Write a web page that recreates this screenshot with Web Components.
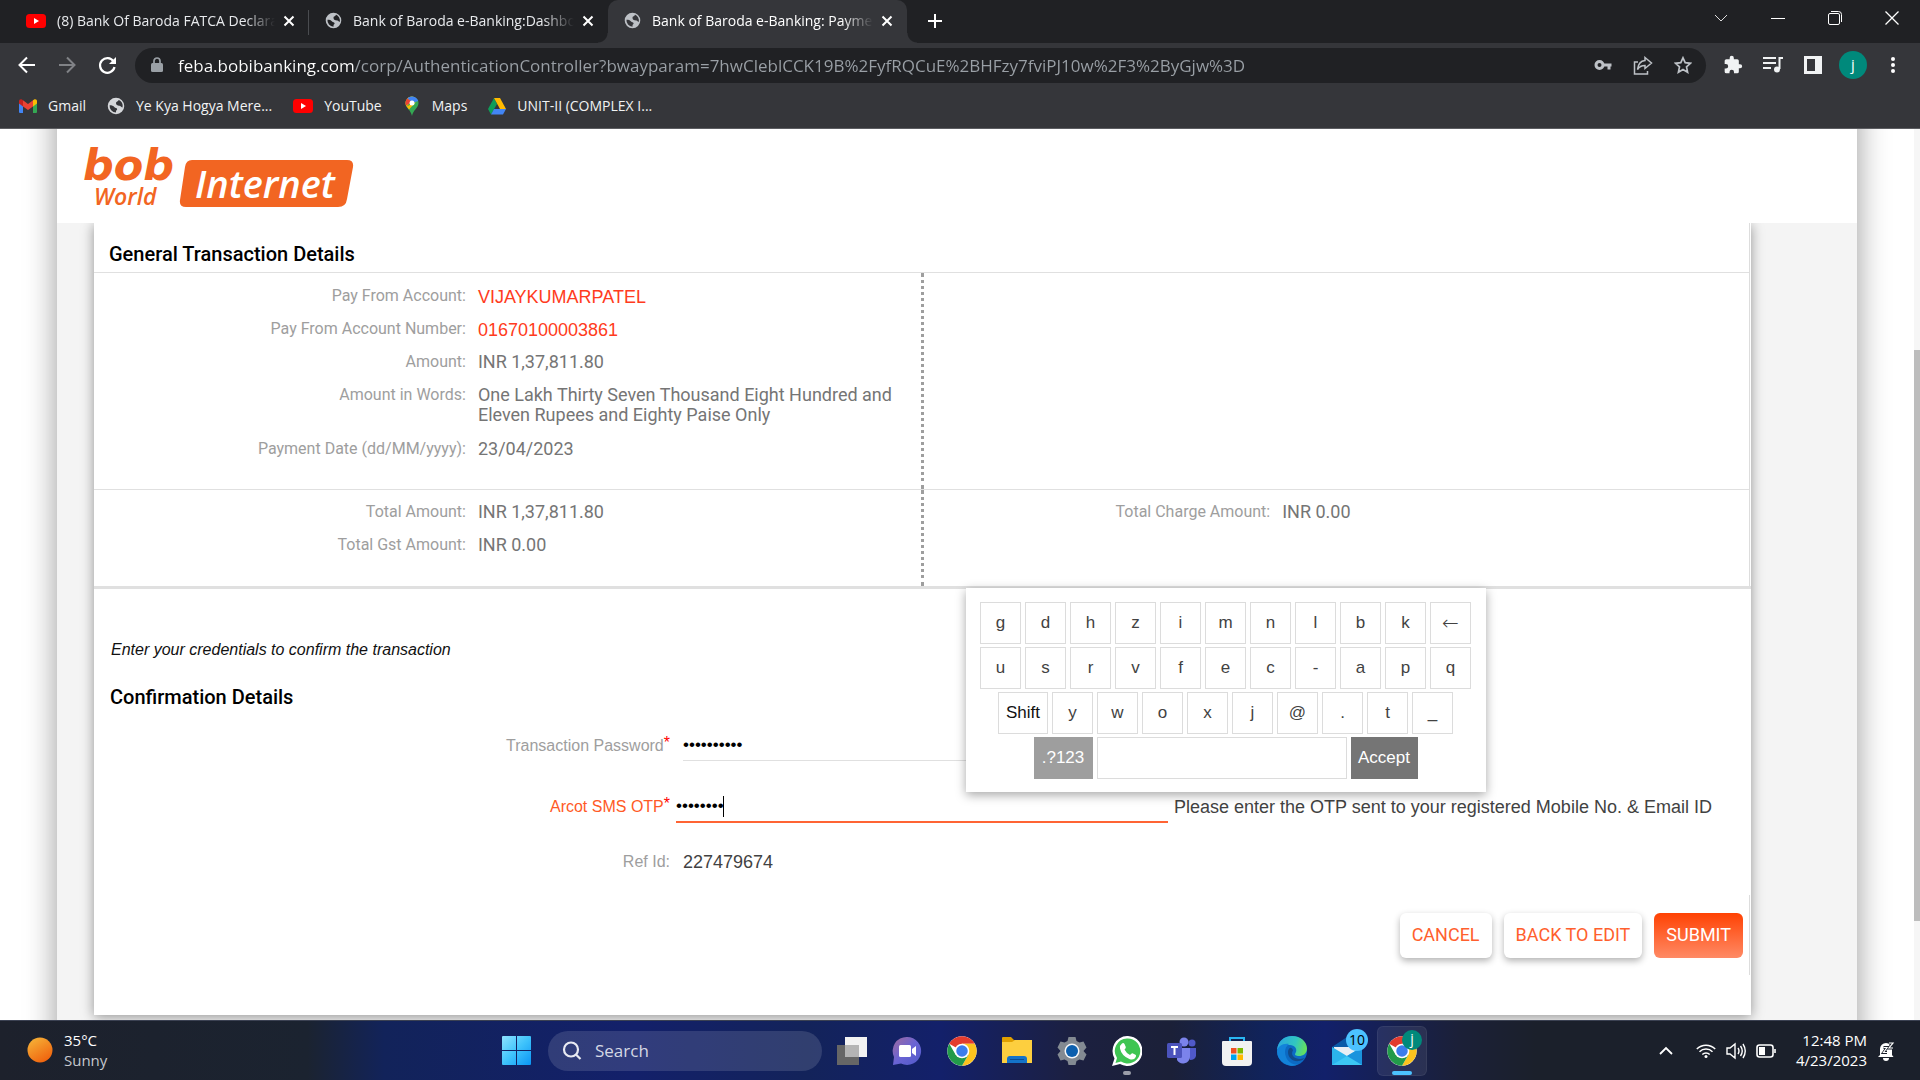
<!DOCTYPE html>
<html lang="en">
<head>
<meta charset="utf-8">
<title>Bank of Baroda e-Banking: Payments</title>
<style>
html,body{margin:0;height:100%;overflow:hidden;background:#fff}
</style>
</head>
<body>
<desktop-screen></desktop-screen>
<script>
const globe = '<svg width="17" height="17" viewBox="0 0 24 24" fill="#bdc1c6"><path d="M12 1a11 11 0 1 0 0 22 11 11 0 0 0 0-22zM3.500 11c3 0 5 .5 6.500 2.500 1 1.500 3 .5 3.500 2.500.3 1.500-1.500 1.500-1.500 3v1.800A8.900 8.900 0 0 1 3.500 11zm8.500-3c0-2 2-1.500 3-3 .6-.8.300-1.500.3-1.500a9 9 0 0 1 5.400 10.500c-1.200 0-1.700-1.500-3.200-2-2-.6-5.500-.5-5.500-4z"/></svg>';
const youtube = '<svg width="20" height="14" viewBox="0 0 20 14"><rect width="20" height="14" rx="3.500" fill="#f00"/><path d="M8 4l5 3-5 3z" fill="#fff"/></svg>';
const chromeIcon = '<svg width="30" height="30" viewBox="0 0 48 48"><circle cx="24" cy="24" r="23.500" fill="#fff"/><path d="M24 24L3.650 12.250A23.500 23.500 0 0 1 44.350 12.250H24z" fill="#e33b2e"/><path d="M44.350 12.250A23.500 23.500 0 0 1 24 47.500L34.200 29.900 24 12.250z" fill="#fcc31e"/><path d="M3.650 12.250A23.500 23.500 0 0 0 24 47.500l10.200-17.600-20.400 0z" fill="#229a4a"/><circle cx="24" cy="24" r="11.700" fill="#fff"/><circle cx="24" cy="24" r="9.200" fill="#3b7ded"/></svg>';

class View extends HTMLElement {
  connectedCallback() {
    if (this.shadowRoot) return;
    const root = this.attachShadow({ mode: "open" });
    root.innerHTML = "<style>*{box-sizing:border-box}button,input{font:inherit;border:0;background:none;padding:0;margin:0;outline:0}" + this.constructor.css + "</style>" + this.render();
  }
  attr(name) { return this.getAttribute(name) || ""; }
}

customElements.define("desktop-screen", class extends View {
  static css = ":host{display:flex;flex-direction:column;height:100vh;font-family:'Open Sans','Noto Sans',sans-serif}bank-page{flex:1;min-height:0}";
  render() { return "<browser-chrome></browser-chrome><bank-page></bank-page><task-bar></task-bar>"; }
});

customElements.define("browser-tab", class extends View {
  static css = `:host{display:flex;align-items:center;width:299px;height:43px;padding:0 10px 2px 16px;box-sizing:border-box;color:#e8eaed;font-size:14px;line-height:20px;position:relative}
  :host([active]){background:#35363a;border-radius:10px 10px 0 0;color:#fff}
  :host([divided]){background:linear-gradient(#4a4c50,#4a4c50) right 10px/1px 25px no-repeat}
  :host([active])::before,:host([active])::after{content:"";position:absolute;bottom:0;width:10px;height:10px}
  :host([active])::before{left:-10px;background:radial-gradient(circle at 0 0,transparent 9px,#35363a 10px)}
  :host([active])::after{right:-10px;background:radial-gradient(circle at 100% 0,transparent 9px,#35363a 10px)}
  .i{display:flex;min-width:17px}
  .t{flex:1;min-width:0;white-space:nowrap;overflow:hidden;margin:0 4px 0 11px;-webkit-mask-image:linear-gradient(90deg,#000 86%,transparent);mask-image:linear-gradient(90deg,#000 86%,transparent)}
  button{width:20px;height:20px;display:grid;place-items:center;color:inherit}`;
  render() { return `<span class="i">${this.attr("icon") === "yt" ? youtube : globe}</span><span class="t"><slot></slot></span><button aria-label="Close tab"><svg width="12" height="12" viewBox="0 0 12 12" stroke="#fff" stroke-width="2" fill="none"><path d="M1.500 1.500l9 9M10.500 1.500l-9 9"/></svg></button>`; }
});

customElements.define("bookmark-link", class extends View {
  static css = ":host{display:block}a{display:flex;align-items:center;gap:11px;color:#f1f3f4;text-decoration:none;font-size:14px;line-height:20px;white-space:nowrap}.i{display:flex}";
  render() { return `<a href="#"><span class="i"><slot name="icon"></slot></span><slot></slot></a>`; }
});

customElements.define("browser-chrome", class extends View {
  static css = `:host{display:block;background:#35363a}
  .strip{display:flex;background:#202124;height:43px;padding-left:10px}
  browser-tab{flex:0 1 299px}
  .cell{display:grid;place-items:center;width:40px;height:40px}
  .new{width:34px;height:42px;margin-left:11px;display:grid;place-items:center}
  .wins{margin-left:auto;display:flex}.wins button{width:57px;height:36px;display:grid;place-items:center}
  .bar{display:flex;align-items:center;height:44px;padding:0 7px}
  .url{flex:1;display:flex;align-items:center;height:35px;background:#202124;border-radius:18px;margin:0 7px 0 8px;padding:0 3px 0 15px;min-width:0}
  .url svg{flex:none}
  .url input{flex:1;min-width:0;margin-left:14px;height:30px;font-size:17px;color:#9aa0a6;-webkit-text-fill-color:transparent;background:linear-gradient(90deg,#fff 176px,#9aa0a6 176px);-webkit-background-clip:text;background-clip:text}
  .av{width:28px;height:28px;border-radius:50%;background:#00897b;color:#fff;font-size:15px;line-height:26px;text-align:center}
  nav{display:flex;align-items:center;gap:21px;height:41px;padding:0 19px 3px}
  .line{height:1px;background:#5c5d61}`;
  render() { return `
  <div class="strip" role="tablist">
    <browser-tab icon="yt" divided>(8) Bank Of Baroda FATCA Declaration</browser-tab>
    <browser-tab>Bank of Baroda e-Banking:Dashboard</browser-tab>
    <browser-tab active>Bank of Baroda e-Banking: Payments</browser-tab>
    <button class="new" aria-label="New tab"><svg width="16" height="16" stroke="#fff" stroke-width="2"><path d="M8 1v14M1 8h14"/></svg></button>
    <div class="wins">
      <button aria-label="Search tabs"><svg width="14" height="9" fill="none" stroke="#ddd"><path d="M1 1l6 6 6-6"/></svg></button>
      <button aria-label="Minimize"><svg width="14" height="14" stroke="#fff"><path d="M0 7.500h14"/></svg></button>
      <button aria-label="Restore"><svg width="14" height="14" fill="none" stroke="#fff"><rect x=".5" y="2.500" width="11" height="11" rx="1.500"/><path d="M3 .5h7.500a3 3 0 0 1 3 3V11"/></svg></button>
      <button aria-label="Close"><svg width="14" height="14" stroke="#fff" stroke-width="1.300"><path d="M.5.5l13 13M13.500.5l-13 13"/></svg></button>
    </div>
  </div>
  <div class="bar">
    <button class="cell" aria-label="Back"><svg width="18" height="18" fill="none" stroke="#fff" stroke-width="2"><path d="M17 9H2M9 1.500L1.500 9 9 16.500"/></svg></button>
    <button class="cell" aria-label="Forward"><svg width="18" height="18" fill="none" stroke="#808286" stroke-width="2"><path d="M1 9h15M9 1.500L16.500 9 9 16.500"/></svg></button>
    <button class="cell" aria-label="Reload"><svg width="19" height="19" viewBox="0 0 19 19" fill="none" stroke="#fff" stroke-width="2.200"><path d="M15.500 5.500A7.300 7.300 0 1 0 16.500 11"/><path d="M18 1v7h-7z" fill="#fff" stroke="none"/></svg></button>
    <div class="url">
      <svg width="14" height="16" viewBox="0 0 14 16"><rect x="1" y="6" width="12" height="9" rx="1.500" fill="#9aa0a6"/><path d="M4 6V4a3 3 0 0 1 6 0v2" fill="none" stroke="#9aa0a6" stroke-width="1.700"/></svg>
      <input aria-label="Address" value="feba.bobibanking.com/corp/AuthenticationController?bwayparam=7hwCleblCCK19B%2FyfRQCuE%2BHFzy7fviPJ10w%2F3%2ByGjw%3D">
      <button class="cell" aria-label="Passwords"><svg width="18" height="12" fill="none" stroke="#bdc1c6"><circle cx="5.500" cy="6" r="3.500" stroke-width="3"/><path d="M9 6h8.500M15 6v4.500" stroke-width="3"/></svg></button>
      <button class="cell" aria-label="Share"><svg width="20" height="19" fill="none" stroke="#bdc1c6" stroke-width="1.500"><path d="M5 6H1.500v12h13v-3"/><path d="M12 1.500L18.500 7 12 12.500V9.500c-4 0-6 1.500-7.500 4C5 9 7 5 12 4.500z"/></svg></button>
      <button class="cell" aria-label="Bookmark"><svg width="18" height="18" viewBox="0 0 18 18" fill="none" stroke="#bdc1c6" stroke-width="1.700"><path d="M9 1.800l2.200 4.900 5.300.6-4 3.600 1.100 5.300L9 13.500l-4.600 2.700 1.100-5.300-4-3.600 5.300-.6z"/></svg></button>
    </div>
    <button class="cell" aria-label="Extensions"><svg width="20" height="20" viewBox="0 0 24 24" fill="#f1f3f4"><path d="M20.500 11H19V7a2 2 0 0 0-2-2h-4V3.500a2.500 2.500 0 0 0-5 0V5H4a2 2 0 0 0-2 2v3.800h1.500a2.700 2.700 0 0 1 0 5.400H2V20a2 2 0 0 0 2 2h3.800v-1.500a2.700 2.700 0 0 1 5.400 0V22H17a2 2 0 0 0 2-2v-4h1.500a2.500 2.500 0 0 0 0-5z"/></svg></button>
    <button class="cell" aria-label="Media"><svg width="20" height="18" fill="none" stroke="#f1f3f4" stroke-width="2"><path d="M0 2h13M0 7h13M0 12h8M16.500 13V2H20"/><circle cx="14" cy="13.500" r="3" fill="#f1f3f4" stroke="none"/></svg></button>
    <button class="cell" aria-label="Side panel"><svg width="18" height="18"><path d="M0 0h18v18H0zM3 3v12h8V3z" fill="#f1f3f4" fill-rule="evenodd"/></svg></button>
    <button class="cell" aria-label="Profile"><span class="av">j</span></button>
    <button class="cell" aria-label="Menu"><svg width="6" height="18" fill="#fff"><circle cx="3" cy="3" r="2"/><circle cx="3" cy="9" r="2"/><circle cx="3" cy="15" r="2"/></svg></button>
  </div>
  <nav>
    <bookmark-link><svg slot="icon" width="18" height="14" viewBox="0 0 18 14"><path d="M0 2v11a1 1 0 0 0 1 1h3V5z" fill="#4285f4"/><path d="M18 2v11a1 1 0 0 1-1 1h-3V5z" fill="#34a853"/><path d="M14 1.200L15.500.3C16.800-.3 18 .8 18 2v2.500l-4 3z" fill="#fbbc04"/><path d="M0 4.500V2C0 .8 1.200-.3 2.500.3L4 1.200v6.300z" fill="#c5221f"/><path d="M4 7.500V1.200L9 5l5-3.800v6.300L9 11z" fill="#ea4335"/></svg>Gmail</bookmark-link>
    <bookmark-link><svg slot="icon" width="18" height="18" viewBox="0 0 24 24" fill="#d5d7da"><path d="M12 1a11 11 0 1 0 0 22 11 11 0 0 0 0-22zM3.500 11c3 0 5 .5 6.500 2.500 1 1.500 3 .5 3.500 2.500.3 1.500-1.500 1.500-1.500 3v1.800A8.900 8.900 0 0 1 3.500 11zm8.500-3c0-2 2-1.500 3-3 .6-.8.300-1.500.3-1.500a9 9 0 0 1 5.400 10.500c-1.200 0-1.700-1.500-3.200-2-2-.6-5.500-.5-5.500-4z"/></svg>Ye Kya Hogya Mere...</bookmark-link>
    <bookmark-link><svg slot="icon" width="20" height="14" viewBox="0 0 20 14"><rect width="20" height="14" rx="3.500" fill="#f00"/><path d="M8 4l5 3-5 3z" fill="#fff"/></svg>YouTube</bookmark-link>
    <bookmark-link><svg slot="icon" width="18" height="20" viewBox="0 0 18 20"><path d="M2.500 7a6.500 6.500 0 0 1 13 0c0 5-5.500 7-6.500 13C8 14 2.500 12 2.500 7z" fill="#34a853"/><path d="M3.600 10.500L12 1.200 9 .5A6.500 6.500 0 0 0 3.600 10.500L6 13.500 13 6z" fill="#fbbc04"/><path d="M4.500 2.400A6.500 6.500 0 0 1 15.200 5L9 7z" fill="#4285f4"/><path d="M4.500 2.400A6.500 6.500 0 0 0 3 9.500L9 6z" fill="#ea4335"/><circle cx="9" cy="7" r="2.500" fill="#fff"/></svg>Maps</bookmark-link>
    <bookmark-link><svg slot="icon" width="18" height="17" viewBox="0 0 18 17"><path d="M6 0L0 11l3 5.500L9 6z" fill="#0f9d58"/><path d="M6 0h6l6 11h-6z" fill="#ffba00"/><path d="M6 11h12l-3 5.500H3z" fill="#4285f4"/></svg>UNIT-II (COMPLEX I...</bookmark-link>
  </nav>
  <div class="line"></div>`; }
});

customElements.define("bob-logo", class extends View {
  static css = ":host{display:block}svg{display:block;overflow:visible}text{font-style:italic;font-family:'Open Sans',sans-serif;font-weight:600}.b{font-family:'DejaVu Sans',sans-serif;font-weight:700}";
  render() { return `<svg width="270" height="68" viewBox="0 0 270 68" role="img" aria-label="bob World Internet">
    <text class="b" x="-2" y="35" font-size="43" fill="#f26522">bob</text>
    <text x="9" y="60" font-size="23" fill="#f26522">World</text>
    <path d="M107 15h155q7 0 6 7l-6 32q-1 8-9 8H101q-7 0-6-7l5-33q1-7 7-7z" fill="#f26522"/>
    <text x="110" y="53" font-size="38" fill="#fff">Internet</text></svg>`; }
});

customElements.define("detail-row", class extends View {
  static css = `:host{display:grid;grid-template-columns:var(--label-share,45%) 1fr;column-gap:12px;min-height:33px;font-family:Roboto,sans-serif;align-items:start}
  .l{text-align:right;font-size:16px;line-height:20px;color:#9e9e9e}
  .v{font-size:18px;line-height:20px;padding-right:24px;color:#757575}
  :host([accent]) .v{padding-top:1px;color:#ff3b20;font-family:"Liberation Sans",sans-serif}`;
  render() { return `<span class="l">${this.attr("label")}</span><span class="v"><slot></slot></span>`; }
});

customElements.define("form-field", class extends View {
  static css = `:host{display:grid;grid-template-columns:576px 1fr;column-gap:13px;align-items:start;font-family:"Liberation Sans",sans-serif;line-height:22px;font-size:18px;color:#424242}
  label{text-align:right;color:#9e9e9e;font-size:16px;display:flex;justify-content:flex-end}
  sup{color:#f00;font-size:16px;line-height:16px;vertical-align:top}
  .box{display:flex;align-items:flex-start;gap:6px;white-space:nowrap}
  input{display:block;width:492px;height:26px;color:#000;border-bottom:1px solid #e0e0e0;font-size:17px;padding:0 0 6px}
  :host([focused]){column-gap:6px}:host([focused]) label{color:#ff5a26}:host([focused]) input{height:27px;border-bottom:2px solid #ff6434;padding:0 0 5px}
  .in{position:relative}.caret{position:absolute;left:47px;top:0;width:1px;height:21px;background:#000}`;
  render() {
    const dots = +this.attr("dots");
    if (!dots) return `<label for="f">${this.attr("label")}</label><output id="f" class="box"><slot></slot></output>`;
    const star = this.hasAttribute("required") ? "<sup>*</sup>" : "";
    const caret = this.hasAttribute("focused") ? '<i class="caret"></i>' : "";
    return `<label for="f">${this.attr("label")}${star}</label><span class="box"><span class="in"><input id="f" type="password" value="${"x".repeat(dots)}">${caret}</span><slot></slot></span>`;
  }
});

customElements.define("virtual-keyboard", class extends View {
  static css = `:host{display:flex;flex-direction:column;align-items:center;gap:3px;padding:14px 14px 13px;width:520px;background:#fff;box-shadow:0 3px 10px rgba(0,0,0,.35);font:17px/20px "Liberation Sans",sans-serif;box-sizing:border-box}
  div{display:flex;gap:4px}button{width:41px;height:42px;border:1px solid #dcdcdc;color:#424242;background:#fff}
  .back{font-family:"DejaVu Sans",sans-serif;font-weight:200;font-size:20px}
  .shift{width:50px;color:#111}.num{width:59px;background:#9e9e9e;border-color:#9e9e9e;color:#fff}.space{width:250px}.ok{width:67px;background:#757575;border-color:#757575;color:#fff}`;
  render() {
    const row = s => "<div>" + [...s].map(k => `<button>${k}</button>`).join("") + "</div>";
    return row("gdhzimnlbk←").replace(">←", ' class="back" aria-label="Backspace">←') + row("usrvfec-apq") + row("Sywoxj@.t_").replace(">S<", ' class="shift">Shift<') +
      '<div><button class="num">.?123</button><button class="space" aria-label="Space"></button><button class="ok">Accept</button></div>';
  }
});

customElements.define("action-button", class extends View {
  static css = `:host{display:block}button{height:45px;padding:0 12px 1px;border-radius:6px;background:#fff;color:#ff5f2e;font:18px/24px Roboto,sans-serif;box-shadow:0 3px 7px rgba(0,0,0,.3)}
  :host([primary]) button{background:linear-gradient(#ff4203,#ff8a65);color:#fff;box-shadow:none}`;
  render() { return "<button><slot></slot></button>"; }
});

customElements.define("bank-page", class extends View {
  static css = `:host{display:flex;overflow:hidden;background:#fff;font-family:Roboto,sans-serif}
  .wrap{flex:1;display:flex;padding:0 57px;overflow:hidden}
  .page{flex:1;display:flex;flex-direction:column;margin:-40px 0;background:#f4f4f4;box-shadow:0 0 30px rgba(0,0,0,.4)}
  header{background:#fff;height:134px;padding:56px 0 0 28px;flex:none;z-index:1}
  main{margin:0 106px 45px 37px;flex:1;background:#fff;box-shadow:0 2px 12px rgba(0,0,0,.4);display:flex;flex-direction:column}
  h2{margin:0;font-size:20px;line-height:24px;font-weight:500;color:#000}
  .sum{border-right:1px solid #ddd;margin-right:1px}
  .sum h2{padding:19px 15px 6px;border-bottom:1px solid #e0e0e0}
  .cols{display:grid;grid-template-columns:calc(50% + 2px) 1fr}
  .cols>div:first-child{border-right:3px dotted #9e9e9e}
  .a>div{padding-top:13px;height:216px}
  .b{border-top:1px solid #e0e0e0}.b>div{padding-top:12px;height:96px}
  .charges{--label-share:42%}
  .words{min-height:54px}
  .cred{position:relative;border-top:3px solid #e0e0e0;flex:1;display:flex;flex-direction:column}
  .note{margin:49px 17px 0;font:italic 16px/24px "Liberation Sans",sans-serif;color:#111}
  .cred h2{margin:23px 16px 0}
  .f{display:flex;flex-direction:column;padding-top:26px}
  .otp{margin:35px 0 28px}
  virtual-keyboard{position:absolute;top:-1px;left:calc(50% + 43px)}
  .acts{display:flex;justify-content:flex-end;gap:12px;margin:22px 1px 0 0;padding:18px 6px 17px;border-right:1px solid #ddd}
  .track{width:6px;background:#f6f6f6;padding-top:221px}.thumb{height:571px;background:#bdbdbd}`;
  render() { return `
  <div class="wrap"><div class="page">
    <header><bob-logo></bob-logo></header>
    <main>
      <section class="sum">
        <h2>General Transaction Details</h2>
        <div class="cols a"><div>
          <detail-row accent label="Pay From Account:">VIJAYKUMARPATEL</detail-row>
          <detail-row accent label="Pay From Account Number:">01670100003861</detail-row>
          <detail-row label="Amount:">INR 1,37,811.80</detail-row>
          <detail-row class="words" label="Amount in Words:">One Lakh Thirty Seven Thousand Eight Hundred and Eleven Rupees and Eighty Paise Only</detail-row>
          <detail-row label="Payment Date (dd/MM/yyyy):">23/04/2023</detail-row>
        </div><div></div></div>
        <div class="cols b"><div>
          <detail-row label="Total Amount:">INR 1,37,811.80</detail-row>
          <detail-row label="Total Gst Amount:">INR 0.00</detail-row>
        </div><div class="charges">
          <detail-row label="Total Charge Amount:">INR 0.00</detail-row>
        </div></div>
      </section>
      <section class="cred">
        <p class="note">Enter your credentials to confirm the transaction</p>
        <h2>Confirmation Details</h2>
        <div class="f">
          <form-field required dots="10" label="Transaction Password"></form-field>
          <form-field class="otp" required focused dots="8" label="Arcot SMS OTP">Please enter the OTP sent to your registered Mobile No. &amp; Email ID</form-field>
          <form-field label="Ref Id:">227479674</form-field>
        </div>
        <div class="acts"><action-button>CANCEL</action-button><action-button>BACK TO EDIT</action-button><action-button primary>SUBMIT</action-button></div>
        <virtual-keyboard></virtual-keyboard>
      </section>
    </main>
  </div></div>
  <div class="track"><div class="thumb"></div></div>`; }
});

customElements.define("task-icon", class extends View {
  static css = `:host{display:grid;place-items:center;width:50px;height:50px;position:relative;border-radius:6px;flex:none}
  :host([active]){background:rgba(255,255,255,.08);box-shadow:inset 0 0 0 1px rgba(255,255,255,.06)}
  button{display:grid;place-items:center}
  .dot{position:absolute;bottom:1px;left:21px;width:8px;height:4px;border-radius:2px;background:#9a9ca8}
  :host([active]) .dot{left:15px;width:20px;background:#4cc2ff}
  .badge{position:absolute;top:3px;left:24px;width:22px;height:22px;border-radius:50%;line-height:21px;font-size:14px;text-align:center;background:#4cc2ff;color:#000}
  :host([active]) .badge{background:#00897b;color:#fff;left:25px;top:4px;width:20px;height:20px;line-height:17px}`;
  render() { return `<button aria-label="${this.attr("name")}"><slot></slot></button>${this.hasAttribute("open") ? '<i class="dot"></i>' : ""}${this.attr("badge") ? `<span class="badge">${this.attr("badge")}</span>` : ""}`; }
});

customElements.define("task-bar", class extends View {
  static css = `:host{display:grid;grid-template-columns:1fr auto 1fr;height:60px;box-sizing:border-box;border-top:1px solid #3b4152;color:#fff;font-size:15px;line-height:20px;
   background:linear-gradient(90deg,#1d212c 0,#1b2330 16%,#12235a 20%,#13206a 33%,#13235a 42%,#13206a 49%,#1c2040 56%,#1b2038 61%,#10235c 66%,#12206a 69%,#1b2038 76%,#1b202b 80%,#1b202b)}
  .w{display:flex;align-items:center;gap:11px;padding:0 27px 2px}.w div span{display:block}.w .s{color:#c6c8cd}
  .m{display:flex;align-items:center;gap:5px;padding-right:1px}
  label{display:flex;align-items:center;gap:13px;width:274px;height:40px;border-radius:20px;background:rgba(255,255,255,.13);padding:0 14px;margin-left:1px}
  label input{width:150px;color:#fff;font-size:17px}input::placeholder{color:#d5d8e4;opacity:1}
  .t{display:flex;align-items:center;justify-content:flex-end;padding-right:26px}.t button{display:grid;place-items:center;width:30px;height:40px}.t .up{margin-right:10px}
  .clk{text-align:right;width:86px;margin-right:11px;padding-bottom:2px;white-space:nowrap}.clk span{display:block}.t .bell{width:16px}`;
  render() { return `
  <div class="w"><svg width="26" height="26"><defs><linearGradient id="s" x1="0" y1="0" x2=".6" y2="1"><stop offset="0" stop-color="#f6b93b"/><stop offset="1" stop-color="#f0650f"/></linearGradient></defs><circle cx="13" cy="13" r="12.500" fill="url(#s)"/></svg><div><span>35°C</span><span class="s">Sunny</span></div></div>
  <div class="m">
    <task-icon name="Start"><svg width="30" height="30"><defs><linearGradient id="g" x1="0" y1="0" x2="1" y2="1"><stop offset="0" stop-color="#8fe3ff"/><stop offset=".5" stop-color="#3fc3fb"/><stop offset="1" stop-color="#0a95f5"/></linearGradient></defs><path d="M0 1q0-1 1-1h13v14H0zM15 0h13q1 0 1 1v13H15zM0 15h14v14H1q-1 0-1-1zM15 15h14v13q0 1-1 1H15z" fill="url(#g)"/></svg></task-icon>
    <label><svg width="20" height="20" fill="none" stroke="#e8eaf2" stroke-width="2.200"><circle cx="9" cy="8.500" r="7"/><path d="M14 13.500l4.500 4.500"/></svg><input type="search" aria-label="Search" placeholder="Search"></label>
    <task-icon name="Task view"><svg width="30" height="28"><rect y="8" width="22" height="20" fill="#666"/><rect x="8" width="22" height="20" fill="#f2f2f2"/><path d="M8 8h14v12H8z" fill="#b4b4b4"/></svg></task-icon>
    <task-icon name="Chat"><svg width="30" height="30"><defs><linearGradient id="c" x1="0" y1="0" x2="1" y2="1"><stop offset="0" stop-color="#a06a9c"/><stop offset=".5" stop-color="#6a64d4"/><stop offset="1" stop-color="#5059c9"/></linearGradient></defs><path d="M15 1a14 14 0 1 1-6 26.600L1 29l1-8A14 14 0 0 1 15 1z" fill="url(#c)"/><rect x="7" y="9" width="12" height="12" rx="1.500" fill="#fff"/><path d="M20 13l4-3v10l-4-3z" fill="#fff"/></svg></task-icon>
    <task-icon name="Chrome">${chromeIcon}</task-icon>
    <task-icon name="Files"><svg width="30" height="27"><path d="M0 1q0-1 1-1h8l3 3h10v6H0z" fill="#e0a000"/><path d="M0 5h10l3-2h17v23H0z" fill="#fdcf3f"/><path d="M5 26v-4q0-3 3-3h14q3 0 3 3v4z" fill="#1473c9"/><path d="M8 22.500h14" stroke="#0a4d94"/></svg></task-icon>
    <task-icon name="Settings"><svg width="30" height="30" viewBox="0 0 30 30"><path d="M11.500 1h7l1 4 3 1.500 4-1 3 6L26.500 15l3 3.500-3 6-4-1-3 1.500-1 4h-7l-1-4-3-1.500-4 1-3-6L3.500 15l-3-3.500 3-6 4 1 3-1.500z" fill="#838a92"/><circle cx="15" cy="15" r="7.500" fill="#f4f6f8"/><circle cx="15" cy="15" r="6" fill="#0c5fae"/></svg></task-icon>
    <task-icon name="WhatsApp" open><svg width="30" height="30"><path d="M15 0a15 15 0 1 1-7 28L0 30l2.500-7.500A15 15 0 0 1 15 0z" fill="#fff"/><path d="M15 2.500a12.500 12.500 0 1 1-6 23L3.500 27l1.500-5A12.500 12.500 0 0 1 15 2.500z" fill="#3fc552"/><path d="M10 7.500q1.500-1 2.500.5l1.300 3q.3 1-1.300 2.500 2 4 5.500 5.500 1.800-2.200 2.500-1.800l3 1.500q1 .6.300 2.300-1.800 3.500-6 2.200Q9.500 20 8 12.500q-.3-3.500 2-5z" fill="#fff"/></svg></task-icon>
    <task-icon name="Teams"><svg width="30" height="28"><circle cx="25" cy="6" r="3.500" fill="#5059c9"/><path d="M20 11h9v8q-1 4-6 4z" fill="#5059c9"/><circle cx="17" cy="5" r="4.500" fill="#7b83eb"/><path d="M10 11h13v9a7 7 0 0 1-13 3z" fill="#7b83eb"/><rect y="6" width="15" height="15" rx="1.500" fill="#4b53bc"/><path d="M4 10h7M7.500 10v8" stroke="#fff" stroke-width="2"/></svg></task-icon>
    <task-icon name="Store"><svg width="30" height="30"><path d="M8 6V2h14v4" fill="none" stroke="#29b6f2" stroke-width="2"/><path d="M0 6q0-1 1-1h28q1 0 1 1v20q0 4-4 4H4q-4 0-4-4z" fill="#f2f2f2"/><path d="M9 12h5.500v5.500H9z" fill="#f25022"/><path d="M15.500 12H21v5.500h-5.500z" fill="#7fba00"/><path d="M9 18.500h5.500V24H9z" fill="#00a4ef"/><path d="M15.500 18.500H21V24h-5.500z" fill="#ffb900"/></svg></task-icon>
    <task-icon name="Edge"><svg width="30" height="30" viewBox="0 0 30 30"><defs><linearGradient id="e" x1="0" y1=".3" x2="1" y2=".5"><stop offset="0" stop-color="#2aa6e0"/><stop offset=".6" stop-color="#31c6c0"/><stop offset="1" stop-color="#66e05a"/></linearGradient></defs><circle cx="15" cy="15" r="15" fill="#0c6ac4"/><path d="M0 14C1 5 7 0 15 0c9 0 15 6 15 12.500 0 5-4 7.500-8 7.500-3 0-5-1-3.500-3 2.500-4-1-8-5.500-8-6 0-11 2-13 5z" fill="url(#e)"/><path d="M0 15c1-5 6-8 12-7-4 3-5 8-3 13s7 8 12 7.500A15 15 0 0 1 0 15z" fill="#1383da"/><path d="M11 16c0 6 5 10 11 9 3-.6 5-2 6-3-2 1-9 2-12-2-1.500-2-1-4 0-5.500 0 0-1-3.500-3-2.500-1 .5-2 2-2 4z" fill="#114a8b"/></svg></task-icon>
    <task-icon name="Mail" badge="10"><svg width="30" height="28"><path d="M0 10L15 0l15 10v4H0z" fill="#0a5aa8"/><path d="M2 10h26v10H2z" fill="#e9eef4"/><path d="M0 10l15 9 15 9H0z" fill="#2bb4ec"/><path d="M30 10L0 28h30z" fill="#3cc7f5"/><path d="M15 19l15 9V10z" fill="#1a93dd"/></svg></task-icon>
    <task-icon name="Chrome" badge="j" active open>${chromeIcon}</task-icon>
  </div>
  <div class="t">
    <button class="up" aria-label="Show hidden icons"><svg width="14" height="9" fill="none" stroke="#fff" stroke-width="1.800"><path d="M1 8l6-6 6 6"/></svg></button>
    <button aria-label="Wi-Fi"><svg width="20" height="16" viewBox="0 0 20 16" fill="none" stroke="#fff" stroke-width="1.500"><path d="M.8 6a13 13 0 0 1 18.400 0M3.500 8.800a9.200 9.200 0 0 1 13 0M6.300 11.500a5.300 5.300 0 0 1 7.400 0"/><circle cx="10" cy="13.500" r="1.500" fill="#fff" stroke="none"/></svg></button>
    <button aria-label="Volume"><svg width="20" height="18" fill="none" stroke="#fff" stroke-width="1.400"><path d="M1 6h3l5-4v14l-5-4H1zM12 6q2 3 0 6M14.500 4q3.500 5 0 10M17 2q4.500 7 0 14"/></svg></button>
    <button aria-label="Battery"><svg width="20" height="14" fill="none" stroke="#fff" stroke-width="1.600"><rect x="1" y="1" width="16" height="12" rx="2.500"/><rect x="3" y="3" width="6" height="8" fill="#fff" stroke="none"/><path d="M19 5v4"/></svg></button>
    <div class="clk"><span>12:48 PM</span><span>4/23/2023</span></div>
    <button class="bell" aria-label="Notifications"><svg width="17" height="20" viewBox="0 0 17 20"><path d="M2 14V8a6 6 0 0 1 12 0v6l1.500 2H0z" fill="#fff"/><path d="M5 17h6a3 3 0 0 1-6 0z" fill="#fff"/><path d="M5.500 6.500H9L5.500 11.500H9M11 2h4l-4 5h4" fill="none" stroke="#1b202b" stroke-width="2.800"/><path d="M5.500 6.500H9L5.500 11.500H9M11 2h4l-4 5h4" fill="none" stroke="#fff" stroke-width="1.200"/></svg></button>
  </div>`; }
});
</script>
</body>
</html>
